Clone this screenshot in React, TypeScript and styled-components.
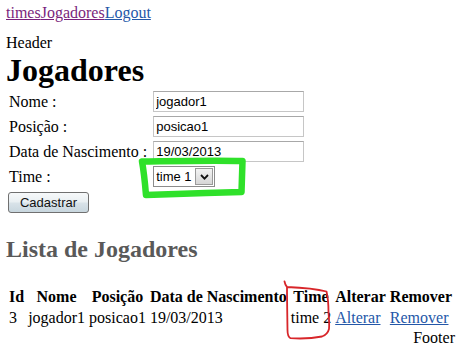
import React from "react";
import styled, { createGlobalStyle } from "styled-components";

const Global = createGlobalStyle`
  html, body { margin: 0; padding: 0; background: #ffffff; }
  body {
    font-family: "Liberation Serif", "Times New Roman", serif;
    font-size: 16px;
    color: #000;
  }
`;

const Page = styled.div`
  position: relative;
  width: 457px;
  height: 350px;
  box-sizing: border-box;
  padding: 0 2px 0 6px;
  overflow: hidden;
`;

const Nav = styled.nav`
  padding-top: 4px;
  height: 18px;
  line-height: 18px;
  margin-bottom: 11px;
  white-space: nowrap;
`;

const NavLink = styled.a<{ $visited?: boolean }>`
  color: ${(p) => (p.$visited ? "#7a1f7c" : "#2457a8")};
  text-decoration: underline;
`;

const HeaderText = styled.div`
  line-height: 19px;
`;

const Title = styled.h1`
  margin: 0;
  font-size: 32px;
  line-height: 36px;
  font-weight: bold;
`;

const FormGrid = styled.form`
  margin-top: 1px;
  padding-left: 3px;
  display: grid;
  grid-template-columns: max-content max-content;
  grid-auto-rows: 25px;
  column-gap: 6px;
  align-items: center;
`;

const Label = styled.label`
  line-height: 18px;
  white-space: nowrap;
`;

const TextInput = styled.input`
  box-sizing: border-box;
  width: 151px;
  height: 21px;
  margin: 0;
  padding: 0 2px;
  border: 1px solid #c6c6c6;
  border-top-color: #a8a8a8;
  background: #fff;
  font-family: "Liberation Sans", Arial, sans-serif;
  font-size: 13px;
  color: #000;
  outline: none;
`;

const SelectBox = styled.div`
  box-sizing: border-box;
  width: 62px;
  height: 21px;
  border: 1px solid #8c8c8c;
  background: #fff;
  display: flex;
  align-items: center;
`;

const NativeSelect = styled.select`
  appearance: none;
  -webkit-appearance: none;
  border: 0;
  background: transparent;
  margin: 0;
  padding: 0 2px;
  width: 42px;
  height: 19px;
  font-family: "Liberation Sans", Arial, sans-serif;
  font-size: 13px;
  color: #000;
  outline: none;
`;

const DropButton = styled.span`
  box-sizing: border-box;
  width: 18px;
  height: 17px;
  margin-left: auto;
  margin-right: 1px;
  border: 1px solid #9a9a9a;
  background: linear-gradient(#f3f3f3, #d6d6d6);
  display: flex;
  align-items: center;
  justify-content: center;
`;

const ButtonRow = styled.div`
  margin-top: 3px;
  padding-left: 2px;
`;

const SubmitButton = styled.button`
  box-sizing: border-box;
  width: 81px;
  height: 21px;
  margin: 0;
  padding: 0;
  border: 1px solid #707070;
  border-radius: 3px;
  background: linear-gradient(#f7f9fa 0%, #e9eff2 48%, #d9e3e9 52%, #c8d6de 100%);
  font-family: "Liberation Sans", Arial, sans-serif;
  font-size: 13px;
  color: #111;
`;

const SectionTitle = styled.h2`
  margin: 22px 0 0;
  font-size: 24px;
  line-height: 28px;
  font-weight: bold;
  color: #595959;
`;

const List = styled.table`
  margin-top: 23px;
  border-collapse: separate;
  border-spacing: 2px;
`;

const Th = styled.th`
  padding: 0 1px;
  line-height: 18.5px;
  font-weight: bold;
  text-align: center;
  white-space: nowrap;
`;

const Td = styled.td`
  padding: 0 1px;
  line-height: 18.5px;
  white-space: nowrap;
`;

const TableLink = styled.a`
  color: #2457a8;
  text-decoration: underline;
`;

const Footer = styled.div`
  text-align: right;
  line-height: 18px;
`;

const Annotations = styled.svg`
  position: absolute;
  left: 0;
  top: 0;
  width: 457px;
  height: 350px;
  pointer-events: none;
`;

export default function App() {
  return (
    <>
      <Global />
      <Page>
        <Nav>
          <NavLink href="#" $visited>times</NavLink>
          <NavLink href="#" $visited>Jogadores</NavLink>
          <NavLink href="#">Logout</NavLink>
        </Nav>
        <HeaderText>Header</HeaderText>
        <Title>Jogadores</Title>
        <FormGrid onSubmit={(e) => e.preventDefault()}>
          <Label>Nome :</Label>
          <TextInput defaultValue="jogador1" />
          <Label>Posição :</Label>
          <TextInput defaultValue="posicao1" />
          <Label>Data de Nascimento :</Label>
          <TextInput defaultValue="19/03/2013" />
          <Label>Time :</Label>
          <SelectBox>
            <NativeSelect defaultValue="1">
              <option value="1">time 1</option>
              <option value="2">time 2</option>
            </NativeSelect>
            <DropButton>
              <svg width="9" height="6" viewBox="0 0 9 6">
                <path d="M1 1 L4.5 4.6 L8 1" fill="none" stroke="#111" strokeWidth="1.8" />
              </svg>
            </DropButton>
          </SelectBox>
        </FormGrid>
        <ButtonRow>
          <SubmitButton type="button">Cadastrar</SubmitButton>
        </ButtonRow>
        <SectionTitle>Lista de Jogadores</SectionTitle>
        <List>
          <thead>
            <tr>
              <Th>Id</Th>
              <Th>Nome</Th>
              <Th>Posição</Th>
              <Th>Data de Nascimento</Th>
              <Th>Time</Th>
              <Th>Alterar</Th>
              <Th>Remover</Th>
            </tr>
          </thead>
          <tbody>
            <tr>
              <Td>3</Td>
              <Td>jogador1</Td>
              <Td>posicao1</Td>
              <Td>19/03/2013</Td>
              <Td>time 2</Td>
              <Td><TableLink href="#">Alterar</TableLink></Td>
              <Td><TableLink href="#">Remover</TableLink></Td>
            </tr>
          </tbody>
        </List>
        <Footer>Footer</Footer>
        <Annotations viewBox="0 0 457 350">
          <path
            d="M142 161.5 C175 161 215 160 242.5 161 L241.5 192 C210 193 175 194 146 195 C145 183 144 172 142 161.5 Z"
            fill="none"
            stroke="#2fe12a"
            strokeWidth="6.5"
            strokeLinejoin="round"
          />
          <path
            d="M284.5 281.5 C285 284 286 286 287 287 C300 287.5 315 288.5 326.5 291.5 C328 298 328.5 305 328.5 312 C329 318 329.5 324 329 329 C328 333 326 335 322 336.5 C312 338.5 300 338.8 290.5 338.2 C288 337 287.5 334 287.5 330 C287.3 315 287 300 287 287"
            fill="none"
            stroke="#d8262a"
            strokeWidth="1.8"
            strokeLinejoin="round"
            strokeLinecap="round"
          />
        </Annotations>
      </Page>
    </>
  );
}
